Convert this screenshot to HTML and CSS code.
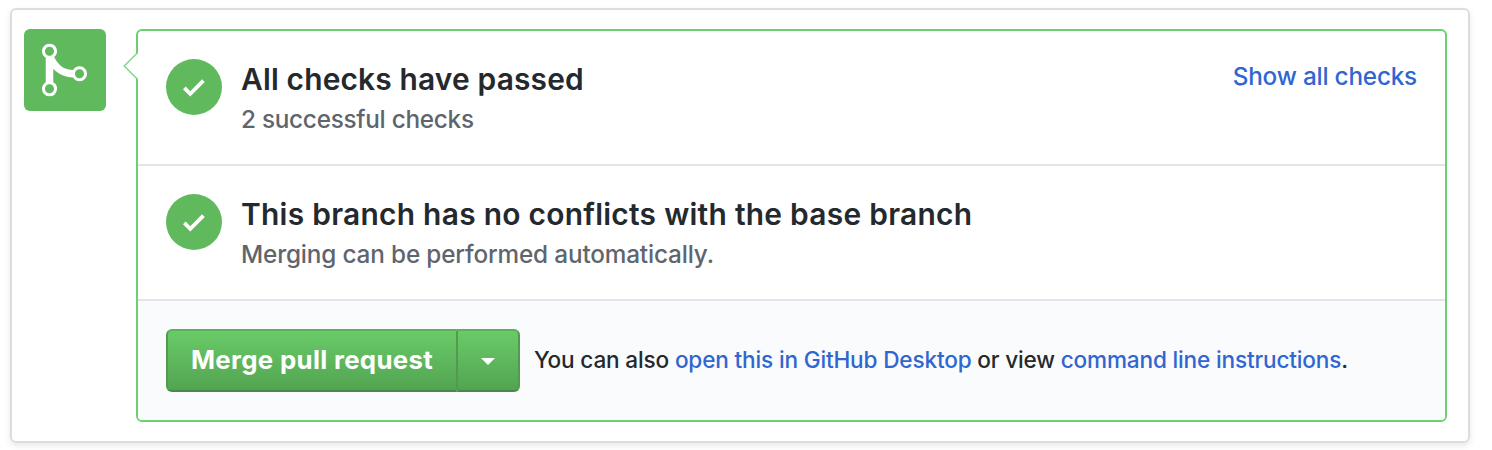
FILE: index.html
```html
<!DOCTYPE html>
<html lang="en">
<head>
<meta charset="utf-8">
<title>Merge pull request</title>
<link rel="stylesheet" href="styles.css">
</head>
<body>
<main class="frame">
  <div class="avatar">
    <svg class="merge-icon" viewBox="0 0 12 16"><path fill="currentColor" fill-rule="evenodd" d="M10 7c-.73 0-1.38.41-1.73 1.02V8C7.22 7.98 6 7.64 5.14 6.98c-.75-.58-1.5-1.61-1.89-2.44A1.993 1.993 0 0 0 2 .99C.89.99 0 1.89 0 3a2 2 0 0 0 1 1.72v6.56c-.59.35-1 .99-1 1.72 0 1.11.89 2 2 2a1.993 1.993 0 0 0 1-3.72V7.67c.67.7 1.44 1.27 2.3 1.69.86.42 2.03.63 2.97.64v-.02c.36.61 1 1.02 1.73 1.02 1.11 0 2-.89 2-2 0-1.11-.89-2-2-2zm-6.8 6c0 .66-.55 1.2-1.2 1.2-.65 0-1.2-.55-1.2-1.2 0-.65.55-1.2 1.2-1.2.65 0 1.2.55 1.2 1.2zM2 4.2C1.34 4.2.8 3.65.8 3c0-.65.55-1.2 1.2-1.2.65 0 1.2.55 1.2 1.2 0 .65-.55 1.2-1.2 1.2zm8 6c-.66 0-1.2-.55-1.2-1.2 0-.65.55-1.2 1.2-1.2.65 0 1.2.55 1.2 1.2 0 .65-.55 1.2-1.2 1.2z"/></svg>
  </div>
  <section class="card">
    <svg class="pointer" viewBox="0 0 16 28"><path d="M15.5 0.5L2 14L15.5 27.5Z" fill="#fff"/><path d="M14.4 .8L1.2 14L14.4 27.2" fill="none" stroke="#7fd683" stroke-width="1.4"/></svg>
    <div class="row">
      <span class="status"><svg class="check" viewBox="0 0 12 16"><path fill="currentColor" d="M12 5l-8 8-4-4 1.5-1.5L4 10l6.5-6.5L12 5z"/></svg></span>
      <div class="copy">
        <h2 class="title title-checks">All checks have passed</h2>
        <p class="note note-checks">2 successful checks</p>
      </div>
      <a class="link toggle">Show all checks</a>
    </div>
    <div class="row">
      <span class="status"><svg class="check" viewBox="0 0 12 16"><path fill="currentColor" d="M12 5l-8 8-4-4 1.5-1.5L4 10l6.5-6.5L12 5z"/></svg></span>
      <div class="copy">
        <h2 class="title title-branch">This branch has no conflicts with the base branch</h2>
        <p class="note note-branch">Merging can be performed automatically.</p>
      </div>
    </div>
    <div class="actions">
      <div class="button-group">
        <button class="button merge"><span>Merge pull request</span></button>
        <button class="button more" aria-label="Select merge method"><span class="caret"></span></button>
      </div>
      <p class="hint">You can also <a class="link">open this in GitHub Desktop</a> or view <a class="link">command line instructions</a>.</p>
    </div>
  </section>
</main>
</body>
</html>
```
FILE: styles.css
```css
* { box-sizing: border-box; }
body {
  margin: 0;
  height: 450px;
  overflow: hidden;
  padding: 8px 22px 0 10px;
  background: #fff;
  color: #24292e;
  font-family: Inter, "Liberation Sans", sans-serif;
}
.frame {
  display: flex;
  gap: 30px;
  height: 435px;
  padding: 19px 21px 19px 12px;
  border: 2px solid #ddd;
  border-radius: 6px;
  box-shadow: 0 3px 7px rgba(0, 0, 0, .09);
}
.avatar {
  display: flex;
  flex: none;
  align-items: center;
  justify-content: center;
  width: 82px;
  height: 82px;
  border-radius: 6px;
  background: #60ba5d;
  color: #fff;
}
.merge-icon { width: 45px; height: 60px; margin-right: 1px; }
.card {
  position: relative;
  display: flex;
  flex: 1;
  flex-direction: column;
  height: 393px;
  border: 2px solid #6dd070;
  border-radius: 6px;
}
.pointer { position: absolute; left: -15px; top: 21px; width: 16px; height: 28px; }
.row {
  display: flex;
  height: 134.5px;
  padding: 28px 28px 0;
  border-bottom: 2px solid #e1e4e8;
}
.row:nth-of-type(1) { height: 135px; }
.status {
  display: flex;
  flex: none;
  align-items: center;
  justify-content: center;
  width: 56px;
  height: 56px;
  border-radius: 50%;
  background: #60ba5d;
  color: #fff;
}
.check { width: 21.75px; height: 29px; }
.copy { flex: 1; margin-left: 19px; white-space: nowrap; }
.title { margin: 2px 0 0; font-size: 29.9px; line-height: 36px; font-weight: 600; }
.title-checks { letter-spacing: .17px; }
.title-branch { letter-spacing: .28px; }
.note { margin: 4px 0 0; color: #5f656d; font-size: 24.3px; line-height: 36px; font-weight: 450; }
.note-checks { letter-spacing: -.26px; }
.note-branch { letter-spacing: -.15px; }
.link { color: #3066d0; text-decoration: none; }
.toggle { margin-top: -1px; font-size: 24.3px; line-height: 36px; font-weight: 450; letter-spacing: -.2px; white-space: nowrap; }
.actions {
  display: flex;
  flex: 1;
  align-items: flex-start;
  padding: 28px 28px 0;
  border-radius: 0 0 4px 4px;
  background: #fafbfd;
}
.button-group { display: flex; flex: none; height: 63px; width: 354px; }
.button {
  display: flex;
  align-items: center;
  justify-content: center;
  padding: 0;
  border: 2px solid;
  border-color: #5bb05b #529a50 #478a46;
  background: linear-gradient(#69cb68, #53a451);
  color: #fff;
  font: 700 25.8px/36px Inter, "Liberation Sans", sans-serif;
  letter-spacing: .33px;
  white-space: nowrap;
}
.merge { width: 292px; border-radius: 6px 0 0 6px; }
.more { width: 62px; border-left: 0; border-radius: 0 6px 6px 0; }
.caret { border: 7.5px solid transparent; border-top-color: #fff; border-bottom: 0; margin-top: 3px; }
.hint { margin: 13px 0 0 14px; font-size: 22.6px; line-height: 36px; font-weight: 450; letter-spacing: -.17px; white-space: nowrap; }
```
